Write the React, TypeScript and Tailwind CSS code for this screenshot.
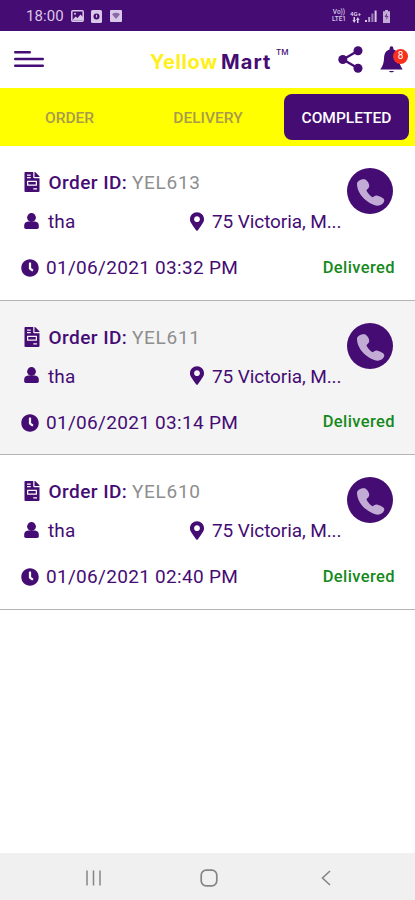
import type { ReactNode } from "react";
import { FaClock, FaFileInvoice, FaMapMarkerAlt } from "react-icons/fa";

type Order = {
  id: string;
  customer: string;
  address: string;
  date: string;
  status: string;
};

const orders: Order[] = [
  { id: "YEL613", customer: "tha", address: "75 Victoria, M...", date: "01/06/2021 03:32 PM", status: "Delivered" },
  { id: "YEL611", customer: "tha", address: "75 Victoria, M...", date: "01/06/2021 03:14 PM", status: "Delivered" },
  { id: "YEL610", customer: "tha", address: "75 Victoria, M...", date: "01/06/2021 02:40 PM", status: "Delivered" },
];

function StatusBar() {
  return (
    <div className="flex h-[30.5px] shrink-0 items-center bg-[#450c74] pl-[26px] pr-[24px] pt-[2px] text-[#d9c8e8]">
      <span className="w-[45px] text-[15px] leading-none tracking-[0.1px]">18:00</span>
      <svg className="h-[12px] w-[13px]" viewBox="0 0 13 12" aria-hidden>
        <rect x="0.8" y="0.8" width="11.4" height="10.4" rx="1" fill="none" stroke="currentColor" strokeWidth="1.5" />
        <path d="M1.5 10 4.5 6.5 6.5 8 9.5 4.5 12 7v3.5H1.5z" fill="currentColor" />
        <circle cx="4" cy="3.8" r="1" fill="currentColor" />
      </svg>
      <svg className="ml-[7px] h-[13px] w-[11px]" viewBox="0 0 11 13" aria-hidden>
        <rect width="11" height="13" rx="1.5" fill="currentColor" />
        <circle cx="5.5" cy="6.5" r="3" fill="#450c74" />
        <path d="M5.5 4.8v2.7" stroke="currentColor" strokeWidth="1.2" />
      </svg>
      <svg className="ml-[8px] h-[12px] w-[12px]" viewBox="0 0 12 12" aria-hidden>
        <rect width="12" height="12" rx="1" fill="currentColor" />
        <path d="M2 4.2Q6 1.5 10 4.2L6 9z" fill="#8b68aa" />
      </svg>
      <div className="ml-auto flex items-center">
        <div className="w-[16px] text-center text-[6.5px] font-medium leading-[7px]">
          <div>Vo))</div>
          <div>LTE1</div>
        </div>
        <div className="ml-[2px] w-[13px] text-center text-[6px] font-bold leading-[7px]">
          <div>4G+</div>
          <svg className="mx-auto h-[6px] w-[8px]" viewBox="0 0 8 6" fill="currentColor" aria-hidden>
            <path d="M1.5 0H3v3h1L2.2 6 .4 3h1.1zM5 6h1.5V3h1.1L5.8 0 4 3h1z" />
          </svg>
        </div>
        <svg className="ml-[3px] h-[12px] w-[12px]" viewBox="0 0 12 12" fill="currentColor" aria-hidden>
          <rect x="0" y="10" width="2" height="2" />
          <rect x="3.2" y="7" width="2" height="5" opacity="0.8" />
          <rect x="6.4" y="3.5" width="2" height="8.5" opacity="0.6" />
          <rect x="9.6" y="0.5" width="2" height="11.5" />
        </svg>
        <svg className="ml-[5px] h-[13px] w-[9px]" viewBox="0 0 9 13" aria-hidden>
          <path d="M3 0h3v1.3h2V13H1V1.3h2z" fill="currentColor" opacity="0.85" />
          <path d="m5 3-2.5 4h2L4 10l2.6-4H5z" fill="#6b3c93" />
        </svg>
      </div>
    </div>
  );
}

function Header() {
  return (
    <header className="flex h-[57px] shrink-0 items-center bg-white pl-[14px] pr-[6px] text-[#450c74]">
      <svg className="h-[18px] w-[30px]" viewBox="0 0 30 18" aria-hidden>
        <path d="M1.2 2.2h14.6M1.2 9h27.6M1.2 15.7h27.6" stroke="currentColor" strokeWidth="2.4" strokeLinecap="round" />
      </svg>
      <div className="ml-[106px] flex items-center whitespace-nowrap pt-[5px] font-['Inter','Liberation_Sans',sans-serif] text-[20px] leading-none">
        <span className="w-[71px] font-bold tracking-[0.6px] text-[#fff01c]">Yellow</span>
        <span className="w-[55px] font-bold tracking-[1.1px]">Mart</span>
        <span className="-mt-[20px] text-[8px] font-medium">TM</span>
      </div>
      <svg className="ml-auto mr-[17px] h-[27px] w-[25px]" viewBox="0 0 25 27" fill="currentColor" aria-hidden>
        <path d="M20 4.7 5 13.5l15 8.8" fill="none" stroke="currentColor" strokeWidth="2.3" />
        <circle cx="4.8" cy="13.5" r="4.5" />
        <circle cx="20" cy="4.7" r="4.5" />
        <circle cx="20" cy="22.3" r="4.5" />
      </svg>
      <div className="relative mt-[1px] h-[28px] w-[29px]">
        <svg className="h-[28px] w-[23px]" viewBox="0 0 23 28" fill="currentColor" aria-hidden>
          <path d="M9.6 2.2a1.9 1.9 0 0 1 3.8 0v1.3c3.9 1.1 5.3 4.3 5.5 8.1.2 4.8 1.1 8.3 3.8 11.9H.3C3 19.9 3.9 16.4 4.1 11.6c.2-3.8 1.6-7 5.500-8.100z" />
          <path d="M9 25h5c-.5 1.7-4.500 1.700-5 0z" />
        </svg>
        <span className="absolute left-[13px] top-[3px] flex size-[15px] items-center justify-center rounded-full bg-[#f8301c] text-[10px] leading-none text-white">
          8
        </span>
      </div>
    </header>
  );
}

function Tabs() {
  return (
    <nav className="flex h-[59.5px] shrink-0 items-center border-b border-[#dedecb] bg-[#ffff00] pr-[6px] text-[15.5px] font-medium">
      <button className="w-[139px] pt-[3px] text-[#a99b4a]">ORDER</button>
      <button className="w-[138px] pt-[3px] text-[#a99b4a]">DELIVERY</button>
      <button className="ml-auto h-[46px] w-[125px] rounded-[8px] bg-[#450c74] pt-[3px] text-white">COMPLETED</button>
    </nav>
  );
}

function UserIcon() {
  return (
    <svg className="-mt-[3px] h-[16px] w-[15px]" viewBox="0 0 15 16" fill="currentColor" aria-hidden>
      <circle cx="7.5" cy="4.5" r="4.4" />
      <path d="M4 8.6h7c2.500.200 3.800 1.700 3.800 3.900v1.800q0 1.700-1.700 1.700H1.900Q.2 16 .2 14.300v-1.800c0-2.200 1.300-3.700 3.800-3.900z" />
    </svg>
  );
}

function PhoneIcon() {
  return (
    <svg className="size-[46px]" viewBox="0 0 138 138" fill="currentColor" aria-hidden>
      <path d="M30 47c0-9 15-15 24-13 8 4 15 17 12 23-2 6-9 8-7 12 5 9 11 15 18 19 5-4 9-7 15-5 10 3 20 8 20 14-1 10-11 16-20 16-26-3-62-32-62-66z" />
    </svg>
  );
}

function Row({ className, children }: { className: string; children: ReactNode }) {
  return <div className={`flex items-center whitespace-nowrap ${className}`}>{children}</div>;
}

function OrderCard({ order, shaded }: { order: Order; shaded: boolean }) {
  return (
    <article
      className={`flex h-[154.5px] shrink-0 flex-col border-b-[1.5px] border-[#b4b4b4] pt-[22px] text-[#450c74] ${shaded ? "bg-[#f4f4f4]" : "bg-white"}`}
    >
      <div className="flex h-[87px] justify-between pr-[22px]">
        <div className="pl-[24px]">
          <Row className="h-[30px]">
            <FaFileInvoice className="-mt-[2px] h-[20px] w-[16px]" aria-hidden />
            <span className="ml-[8.5px] w-[83.5px] pt-[1px] text-[19px] font-medium tracking-[0.45px]">Order ID:</span>
            <span className="pt-[1px] text-[19px] tracking-[0.7px] text-[#8e8e8e]">{order.id}</span>
          </Row>
          <Row className="mt-[9px] h-[30px] text-[19px]">
            <UserIcon />
            <span className="ml-[9px] w-[142px] pt-[1px] tracking-[0.1px]">{order.customer}</span>
            <FaMapMarkerAlt className="-mt-[2px] h-[19px] w-[14px]" aria-hidden />
            <span className="ml-[8px] pt-[1px] tracking-[-0.1px]">{order.address}</span>
          </Row>
        </div>
        <button className="size-[46px] shrink-0 rounded-full bg-[#450c74] text-[#c2acd5]" aria-label="Call">
          <PhoneIcon />
        </button>
      </div>
      <Row className="h-[26px] pl-[21px] pr-[20px]">
        <FaClock className="size-[18px]" aria-hidden />
        <span className="ml-[7px] pt-[1px] text-[19px] tracking-[0.3px]">{order.date}</span>
        <span className="ml-auto text-[16.5px] font-medium tracking-[0.4px] text-[#16891c]">{order.status}</span>
      </Row>
    </article>
  );
}

function NavigationBar() {
  return (
    <footer className="flex h-[47px] shrink-0 items-center bg-[#f0f0f0] pb-px pl-[85px] pr-[84px] pt-[3px] text-[#858585]">
      <svg className="h-[18px] w-[17px]" viewBox="0 0 17 18" aria-hidden>
        <path d="M2 1.5v15M8.5 1.5v15M15 1.5v15" stroke="currentColor" strokeWidth="1.5" />
      </svg>
      <svg className="ml-[98px] size-[18px]" viewBox="0 0 18 18" aria-hidden>
        <rect x="1.2" y="1.2" width="15.6" height="15.6" rx="5" fill="none" stroke="currentColor" strokeWidth="1.7" />
      </svg>
      <svg className="ml-auto h-[16px] w-[10px]" viewBox="0 0 10 16" aria-hidden>
        <path d="m9 1-7.5 7L9 15" fill="none" stroke="currentColor" strokeWidth="1.6" />
      </svg>
    </footer>
  );
}

export default function App() {
  return (
    <div className="flex h-[900px] w-[415px] flex-col overflow-hidden bg-white font-['Roboto','Liberation_Sans',sans-serif]">
      <StatusBar />
      <Header />
      <Tabs />
      <main className="-mt-px flex flex-1 flex-col">
        {orders.map((order, index) => (
          <OrderCard key={order.id} order={order} shaded={index % 2 === 1} />
        ))}
      </main>
      <NavigationBar />
    </div>
  );
}
